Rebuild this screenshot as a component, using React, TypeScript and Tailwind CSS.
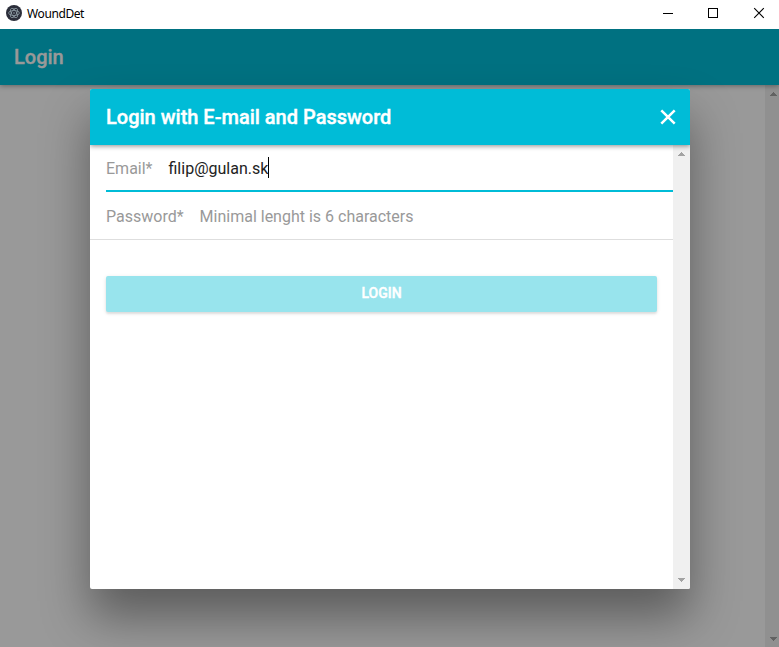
import React from "react";

function ElectronLogo() {
  return (
    <svg className="h-4 w-4 shrink-0" viewBox="0 0 16 16" fill="none">
      <circle cx="8" cy="8" r="8" fill="#2b2e3a" />
      <g stroke="#a3b4bb" strokeWidth="0.65">
        <ellipse cx="8" cy="8" rx="5.3" ry="2.4" />
        <ellipse cx="8" cy="8" rx="5.3" ry="2.4" transform="rotate(60 8 8)" />
        <ellipse cx="8" cy="8" rx="5.3" ry="2.4" transform="rotate(120 8 8)" />
      </g>
      <circle cx="8" cy="8" r="2" fill="#2b2e3a" />
      <circle cx="8" cy="8" r="0.7" fill="#a3b4bb" />
    </svg>
  );
}

function TitleBar() {
  return (
    <div className="flex h-[29px] shrink-0 items-start bg-white">
      <div className="flex h-[26px] flex-1 items-center gap-[5px] pl-1.5">
        <ElectronLogo />
        <span className="pt-0.5 font-['Noto_Sans','Open_Sans',sans-serif] text-[12px] leading-4 tracking-[-0.4px] text-black">
          WoundDet
        </span>
      </div>
      <svg className="h-[26px] w-[116px]" viewBox="0 0 116 26" fill="none" stroke="#000" shapeRendering="crispEdges">
        <path d="M0 13.5h10" />
        <rect x="45.5" y="8.5" width="9" height="9" />
        <path d="M91.2 8.2l9.6 9.6M100.8 8.2l-9.6 9.6" shapeRendering="auto" strokeWidth="1.1" />
      </svg>
    </div>
  );
}

function Arrow({ down = false, color }: { down?: boolean; color: string }) {
  return (
    <svg className="h-1 w-[7px]" viewBox="0 0 7 4" fill={color} shapeRendering="crispEdges">
      {down ? (
        <path d="M0 0h7v1H6v1H5v1H4v1H3V3H2V2H1V1H0z" />
      ) : (
        <path d="M3 0h1v1h1v1h1v1h1v1H0V3h1V2h1V1h1z" />
      )}
    </svg>
  );
}

function Modal() {
  return (
    <section className="flex h-[500px] w-[600px] flex-col overflow-hidden rounded-[2px] bg-white shadow-[0_28px_48px_rgba(0,0,0,0.4)]">
      <header className="z-10 flex h-14 shrink-0 items-center justify-between bg-[#00bcd7] pr-[14px] pl-4 text-white shadow-[0_1px_5px_rgba(0,0,0,0.45)]">
        <h2 className="text-[20px] leading-6 font-medium [-webkit-text-stroke:0.4px]">
          Login with E-mail and Password
        </h2>
        <svg className="h-4 w-4" viewBox="0 0 16 16" fill="none" stroke="white" strokeWidth="2.5">
          <path d="M1.3 1.3l13.4 13.4M14.7 1.3L1.3 14.7" />
        </svg>
      </header>
      <div className="flex min-h-0 flex-1">
        <main className="flex-1 text-[16px] leading-[19px]">
          <label className="ml-4 flex h-[47px] items-center border-b-2 border-[#00bcd7] pt-0.5">
            <span className="mr-4 text-[#999]">Email*</span>
            <span className="text-[#222]">filip@gulan.sk</span>
            <span className="-mt-0.5 h-[21px] w-px bg-black" />
          </label>
          <label className="flex h-12 items-center border-b border-[#dedede] pt-0.5 pl-4 text-[#999]">
            <span className="mr-4">Password*</span>
            <span>Minimal lenght is 6 characters</span>
          </label>
          <button className="mt-9 ml-4 flex h-9 w-[551px] items-center justify-center rounded-[2px] bg-[#98e4ed] pb-0.5 text-[14px] leading-4 font-medium text-white shadow-[0_2px_2px_rgba(0,0,0,0.08),0_1px_4px_rgba(0,0,0,0.1)] [-webkit-text-stroke:0.4px]">
            LOGIN
          </button>
        </main>
        <div className="flex w-[17px] flex-col items-center justify-between bg-[#f0f0f0] pt-[7px] pb-[7px]">
          <Arrow color="#a3a3a3" />
          <Arrow down color="#a3a3a3" />
        </div>
      </div>
    </section>
  );
}

export default function App() {
  return (
    <div className="flex h-[647px] w-[779px] flex-col overflow-hidden font-['Roboto',sans-serif]">
      <TitleBar />
      <div className="relative flex min-h-0 flex-1 flex-col overflow-hidden bg-[#999]">
        <header className="z-0 flex h-14 shrink-0 items-center bg-[#007181] pl-3.5 shadow-[0_1px_5px_rgba(0,0,0,0.35)]">
          <h1 className="text-[20px] leading-6 font-medium text-[#999] [-webkit-text-stroke:0.4px]">Login</h1>
        </header>
        <div className="flex flex-1 justify-end">
          <div className="flex w-[14px] flex-col items-end justify-between bg-[#909090] pt-[7px] pr-[2px] pb-[6px]">
            <Arrow color="#626262" />
            <Arrow down color="#626262" />
          </div>
        </div>
        <div className="absolute inset-0 flex items-start justify-center pt-[60px] pl-px">
          <Modal />
        </div>
      </div>
    </div>
  );
}
